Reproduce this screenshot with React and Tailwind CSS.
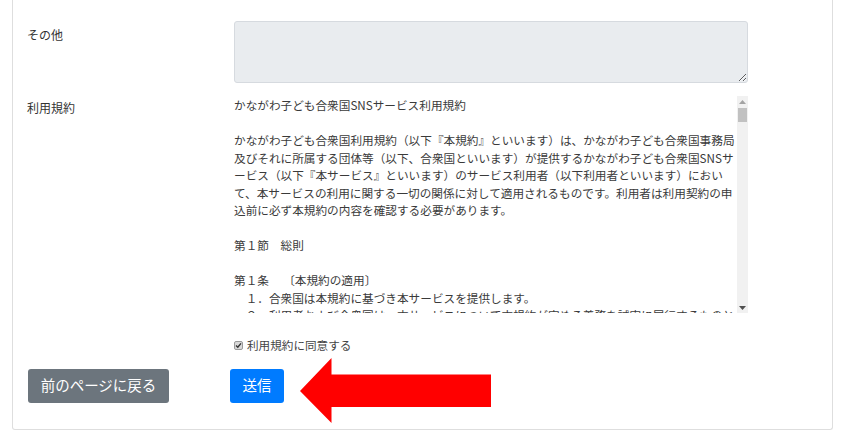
import React from 'react';

const font = { fontFamily: '"Noto Sans CJK JP", "Noto Sans", sans-serif' };

const termsLines = [
  'かながわ子ども合衆国SNSサービス利用規約',
  '',
  'かながわ子ども合衆国利用規約（以下『本規約』といいます）は、かながわ子ども合衆国事務局',
  '及びそれに所属する団体等（以下、合衆国といいます）が提供するかながわ子ども合衆国SNSサ',
  'ービス（以下『本サービス』といいます）のサービス利用者（以下利用者といいます）におい',
  'て、本サービスの利用に関する一切の関係に対して適用されるものです。利用者は利用契約の申',
  '込前に必ず本規約の内容を確認する必要があります。',
  '',
  '第１節　総則',
  '',
  '第１条　 〔本規約の適用〕',
  '　１．合衆国は本規約に基づき本サービスを提供します。',
  '　２．利用者および合衆国は、本サービスについて本規約が定める義務を誠実に履行するものと',
];

const FakeScrollbar = () => (
  <div className="w-[11px] bg-[#f1f1f1] flex flex-col items-center">
    <div className="h-[11px] flex items-center justify-center">
      <svg width="7" height="4" viewBox="0 0 7 4">
        <polygon points="3.5,0 7,4 0,4" fill="#a3a3a3" />
      </svg>
    </div>
    <div className="mt-[1px] w-[9px] h-[14px] bg-[#c1c1c1]"></div>
    <div className="flex-1"></div>
    <div className="h-[11px] flex items-center justify-center">
      <svg width="7" height="4" viewBox="0 0 7 4">
        <polygon points="0,0 7,0 3.5,4" fill="#505050" />
      </svg>
    </div>
  </div>
);

const FormRow = ({ label, labelPad, children, className = '' }) => (
  <div className={`flex ${className}`}>
    <div className={`w-[221px] pl-[14px] ${labelPad} text-[12px] leading-[17.5px] text-[#333]`}>{label}</div>
    <div className="w-[514px]">{children}</div>
  </div>
);

export default function App() {
  return (
    <div className="bg-white w-[841px] h-[438px] overflow-hidden" style={font}>
      <div className="ml-[12px] w-[821px] h-[430px] border border-t-0 border-[#dedede] rounded-b-[3px] pt-[21px]">
        <FormRow label="その他" labelPad="pt-[5px]">
          <textarea
            readOnly
            className="block w-full h-[62px] bg-[#e9ecef] border border-[#d6dadf] rounded-[3px] outline-none"
          />
        </FormRow>

        <FormRow label="利用規約" labelPad="pt-[3px]" className="mt-[13px]">
          <div className="flex h-[217px]">
            <div className="flex-1 h-[217px] overflow-hidden text-[11.65px] leading-[17.5px] text-[#3a3a3a]">
              {termsLines.map((line, i) => (
                <div key={i} className="whitespace-pre h-[17.5px]">{line}</div>
              ))}
            </div>
            <FakeScrollbar />
          </div>
        </FormRow>

        <div className="flex mt-[24px]">
          <div className="w-[221px]"></div>
          <label className="flex items-center text-[11.6px] leading-[17.5px] text-[#444]">
            <span className="w-[9px] h-[9px] rounded-[2px] bg-[#d9d9d9] border border-[#9a9a9a] flex items-center justify-center mr-[4px]">
              <svg width="7" height="7" viewBox="0 0 7 7">
                <path d="M1 3.6 L2.8 5.3 L6 1.4" fill="none" stroke="#333" strokeWidth="1.4" />
              </svg>
            </span>
            利用規約に同意する
          </label>
        </div>

        <div className="flex items-start mt-[3px] pl-[15px]">
          <button className="mt-[11px] w-[141px] h-[34px] rounded-[3px] bg-[#6c757d] text-white text-[14.5px] leading-none">
            前のページに戻る
          </button>
          <button className="mt-[11px] ml-[61px] w-[54px] h-[34px] rounded-[3px] bg-[#007bff] text-white text-[14.5px] leading-none">
            送信
          </button>
          <svg className="ml-[16px]" width="191" height="65" viewBox="0 0 191 65">
            <polygon points="0,33 31.5,0 31.5,16.5 191,16.5 191,49 31.5,49 31.5,65" fill="#ff0000" />
          </svg>
        </div>
      </div>
    </div>
  );
}
